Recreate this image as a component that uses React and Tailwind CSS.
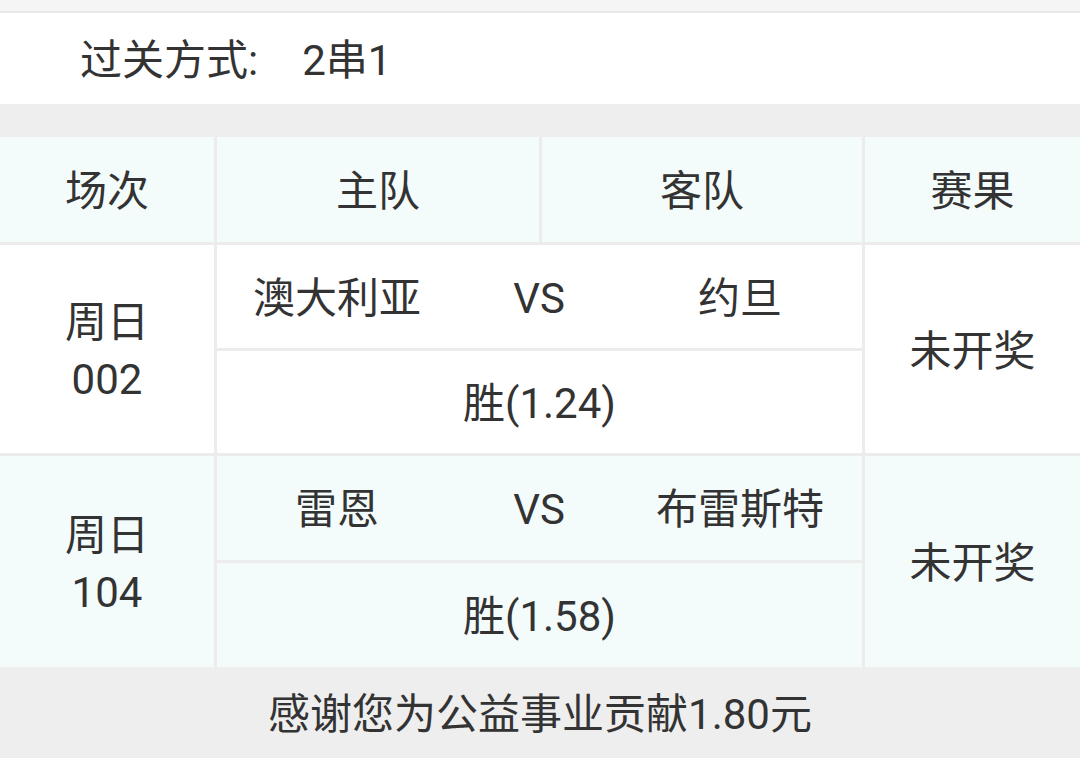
import React from "react";

const matches = [
  {
    id: "周日",
    no: "002",
    home: "澳大利亚",
    away: "约旦",
    pick: "胜(1.24)",
    result: "未开奖",
    bg: "bg-white",
    sub: "h-[103px]",
    sub2: "h-[102px]",
  },
  {
    id: "周日",
    no: "104",
    home: "雷恩",
    away: "布雷斯特",
    pick: "胜(1.58)",
    result: "未开奖",
    bg: "bg-[#f4fbfb]",
    sub: "h-[104px]",
    sub2: "h-[104px]",
  },
];

function MatchRow({ m }) {
  return (
    <div className="grid grid-cols-[214px_645px_1fr] gap-x-[3px]">
      <div className={`${m.bg} flex flex-col items-center justify-center leading-[57px] pt-[4px]`}>
        <span>{m.id}</span>
        <span>{m.no}</span>
      </div>
      <div className="flex flex-col gap-y-[3px]">
        <div className={`${m.bg} ${m.sub} flex items-center pt-[3px]`}>
          <div className="w-[240px] text-center">{m.home}</div>
          <div className="w-[164px] text-center">VS</div>
          <div className="w-[238px] text-center">{m.away}</div>
        </div>
        <div className={`${m.bg} ${m.sub2} flex items-center justify-center pt-[3px]`}>
          {m.pick}
        </div>
      </div>
      <div className={`${m.bg} flex items-center justify-center pt-[4px]`}>
        {m.result}
      </div>
    </div>
  );
}

export default function App() {
  return (
    <div className="w-[1080px] h-[758px] overflow-hidden bg-[#eeeeee] text-[#333333] text-[42px] font-[Roboto,'Noto_Sans_CJK_SC',sans-serif]">
      <div className="h-[11px] bg-[#f5f5f5]" />
      <div className="h-[2px] bg-[#e8e8e8]" />
      <div className="h-[91px] bg-white flex items-center pl-[80px] pt-[3px]">
        <span>过关方式:</span>
        <span className="ml-[44px]">2串1</span>
      </div>
      <div className="h-[33px]" />
      <div className="bg-[#ececec] flex flex-col gap-y-[3px]">
        <div className="grid grid-cols-[214px_322px_320px_1fr] gap-x-[3px] h-[105px]">
          <div className="bg-[#f4fbfb] flex items-center justify-center pt-[3px]">场次</div>
          <div className="bg-[#f4fbfb] flex items-center justify-center pt-[3px]">主队</div>
          <div className="bg-[#f4fbfb] flex items-center justify-center pt-[3px]">客队</div>
          <div className="bg-[#f4fbfb] flex items-center justify-center pt-[3px]">赛果</div>
        </div>
        {matches.map((m) => (
          <MatchRow key={m.no} m={m} />
        ))}
      </div>
      <div className="h-[91px] flex items-center justify-center pt-[3px]">
        感谢您为公益事业贡献1.80元
      </div>
    </div>
  );
}
